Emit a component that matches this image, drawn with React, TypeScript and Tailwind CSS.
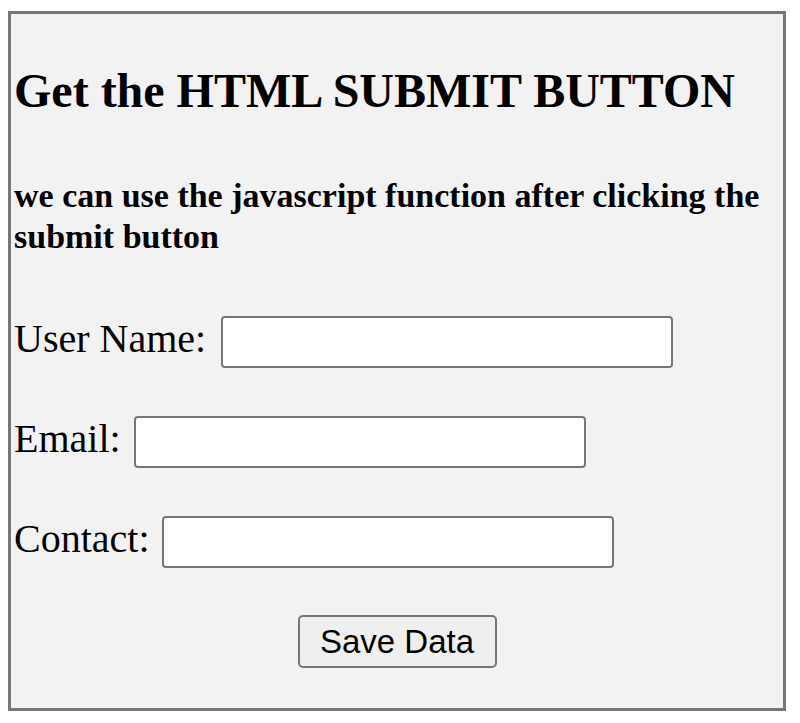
import React from 'react';

function Field({ label, gap }: { label: string; gap: string }) {
  return (
    <div className={`flex items-start ${gap}`}>
      <label className="text-[40px] leading-[46px] text-black">{label}</label>
      <input
        type="text"
        className="w-[452px] h-[52px] bg-white border-2 border-[#767676] rounded-[4px] outline-none"
      />
    </div>
  );
}

export default function App() {
  return (
    <div className="min-h-screen bg-white pt-[11px] pl-[8px]" style={{ fontFamily: '"Liberation Serif", "Times New Roman", serif' }}>
      <div className="w-[778px] h-[700px] border-[3px] border-[#777777] bg-[#f3f2f3] pl-[3px] flex flex-col">
        <h2 className="mt-[49px] text-[48px] leading-[56px] font-bold text-black">
          Get the HTML SUBMIT BUTTON
        </h2>
        <p className="mt-[56px] text-[34px] leading-[41px] font-bold text-black">
          we can use the javascript function after clicking the submit button
        </p>
        <div className="mt-[59px] flex flex-col gap-[48px]">
          <Field label="User Name:" gap="gap-[15px]" />
          <Field label="Email:" gap="gap-[13px]" />
          <Field label="Contact:" gap="gap-[12px]" />
        </div>
        <div className="mt-[47px] flex justify-center pr-[3px]">
          <button
            type="button"
            className="w-[199px] h-[53px] bg-[#efefef] border-2 border-[#767676] rounded-[5px] text-[33px] text-black"
            style={{ fontFamily: '"Liberation Sans", Arial, sans-serif' }}
          >
            Save Data
          </button>
        </div>
      </div>
    </div>
  );
}
